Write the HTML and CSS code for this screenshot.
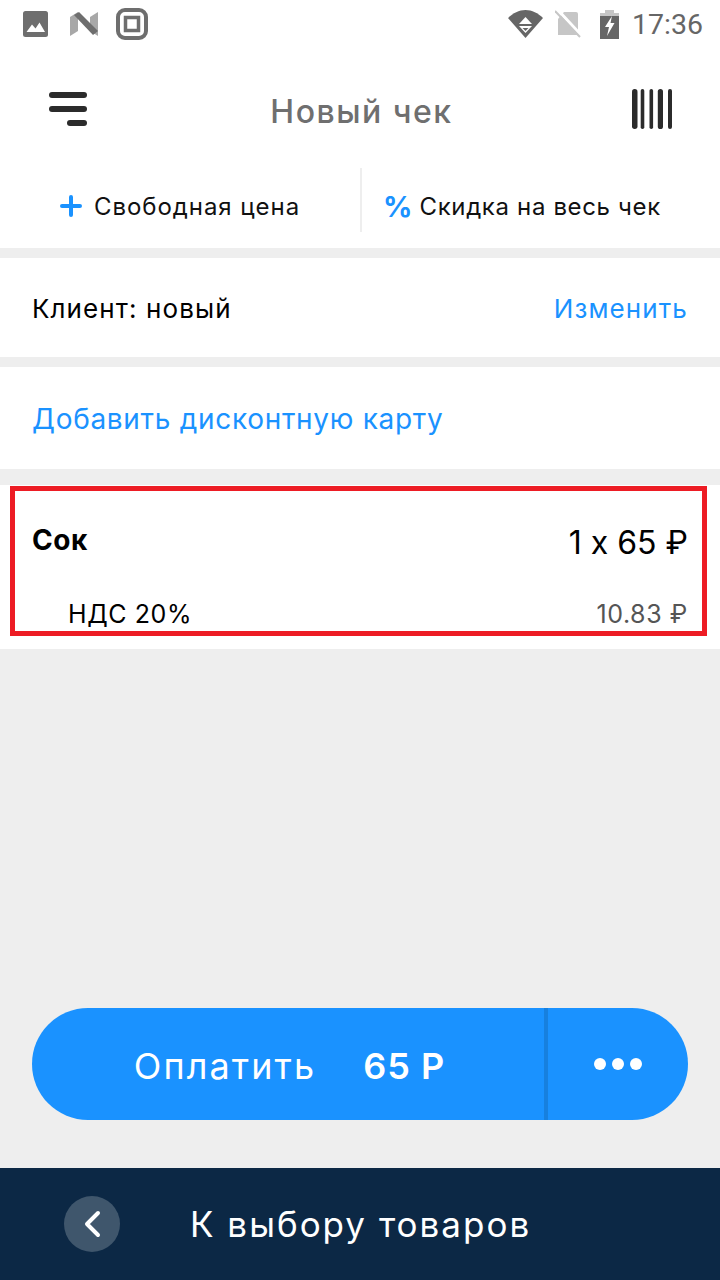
FILE: index.html
```html
<!DOCTYPE html>
<html lang="ru">
<head>
    <meta charset="UTF-8">
    <meta name="viewport" content="width=device-width, initial-scale=1.0">
    <title>Новый чек</title>
    <link rel="stylesheet" href="styles.css">
</head>
<body>
    <div class="screen">
        <!-- Status bar -->
        <div class="status-bar">
            <div class="status-left">
                <svg class="status-image" width="25" height="26" viewBox="0 0 25 26">
                    <rect width="25" height="26" rx="2.5" fill="#6e6e6e"/>
                    <path d="M3.5 21 9 13.5 12.5 17.5 16.5 11.5 22 21Z" fill="#fff"/>
                </svg>
                <svg class="status-n" width="28" height="24" viewBox="0 0 28 24">
                    <path d="M0 5 8 0V19L0 24Z" fill="#a8a8a8"/>
                    <path d="M20 5 28 0V24L20 19Z" fill="#a8a8a8"/>
                    <path d="M4 3 9 0 28 19 23 23Z" fill="#6e6e6e"/>
                </svg>
                <svg class="status-square" width="32" height="32" viewBox="0 0 32 32">
                    <rect x="2" y="2" width="28" height="28" rx="7" fill="none" stroke="#6e6e6e" stroke-width="4"/>
                    <rect x="9.5" y="9.5" width="13" height="13" fill="none" stroke="#6e6e6e" stroke-width="3.5"/>
                </svg>
            </div>
            <div class="status-right">
                <svg class="status-wifi" width="35" height="28" viewBox="0 0 35 28">
                    <path d="M0 8C5 3 11 0 17.5 0S30 3 35 8L17.5 28Z" fill="#666"/>
                    <path d="M17.5 7 24 14H11Z" fill="#fff"/>
                    <path d="M11 16H24L17.5 23Z" fill="#fff"/>
                    <path d="M14.5 18H20.5L17.5 21Z" fill="#666"/>
                </svg>
                <svg class="status-sim" width="26" height="28" viewBox="0 0 26 28">
                    <path d="M3 9 9 2H21Q23 2 23 4V25H3Z" fill="#c6c6c6"/>
                    <path d="M2 -1 26 25" stroke="#fff" stroke-width="3"/>
                    <path d="M0 1 25 27" stroke="#c6c6c6" stroke-width="2"/>
                </svg>
                <svg class="status-battery" width="19" height="29" viewBox="0 0 19 29">
                    <path d="M5 0H14V3H19V29H0V3H5Z" fill="#c6c6c6"/>
                    <path d="M0 6H19V29H0Z" fill="#666"/>
                    <path d="M12 6 5 17H9L7 26 14.5 13H10.5Z" fill="#fff"/>
                </svg>
                <span class="status-time">17:36</span>
            </div>
        </div>

        <!-- Header -->
        <header class="header">
            <svg class="menu-icon" width="38" height="34" viewBox="0 0 38 34">
                <rect y="0" width="38" height="6" rx="3" fill="#2b2b2b"/>
                <rect y="14" width="38" height="6" rx="3" fill="#2b2b2b"/>
                <rect x="18" y="28" width="20" height="6" rx="3" fill="#2b2b2b"/>
            </svg>
            <h1 class="header-title">Новый чек</h1>
            <svg class="barcode-icon" width="40" height="40" viewBox="0 0 40 40">
                <rect x="0" width="5.5" height="40" rx="2.7" fill="#2b2b2b"/>
                <rect x="8.7" width="3.6" height="40" rx="1.8" fill="#2b2b2b"/>
                <rect x="17.5" width="3.6" height="40" rx="1.8" fill="#2b2b2b"/>
                <rect x="25.8" width="5.2" height="40" rx="2.6" fill="#2b2b2b"/>
                <rect x="36" width="4" height="40" rx="2" fill="#2b2b2b"/>
            </svg>
        </header>

        <!-- Actions -->
        <div class="actions">
            <div class="action action-left">
                <svg width="22" height="22" viewBox="0 0 22 22">
                    <path d="M11 2V20M2 11H20" stroke="#1a92ff" stroke-width="4" stroke-linecap="round"/>
                </svg>
                <span>Свободная цена</span>
            </div>
            <div class="action action-right">
                <span class="percent">%</span>
                <span>Скидка на весь чек</span>
            </div>
        </div>

        <div class="row row-client">
            <span>Клиент: новый</span>
            <span class="link">Изменить</span>
        </div>

        <div class="row row-card">
            <span class="link">Добавить дисконтную карту</span>
        </div>

        <!-- Receipt item -->
        <div class="item">
            <div class="item-main">
                <span class="item-name">Сок</span>
                <span class="item-price">1 x 65 ₽</span>
            </div>
            <div class="item-tax">
                <span>НДС 20%</span>
                <span class="item-tax-sum">10.83 ₽</span>
            </div>
            <div class="item-mark"></div>
        </div>

        <div class="spacer"></div>

        <!-- Pay button -->
        <div class="pay">
            <div class="pay-main">
                <span>Оплатить</span>
                <span class="pay-sum">65 Р</span>
            </div>
            <div class="pay-more">
                <i></i><i></i><i></i>
            </div>
        </div>

        <!-- Bottom bar -->
        <footer class="footer">
            <div class="back">
                <svg width="18" height="28" viewBox="0 0 18 28">
                    <path d="M15 3 4 14 15 25" fill="none" stroke="#fff" stroke-width="4" stroke-linecap="round" stroke-linejoin="round"/>
                </svg>
            </div>
            <span class="footer-text">К выбору товаров</span>
        </footer>
    </div>
</body>
</html>
```

FILE: styles.css
```css
* {
    box-sizing: border-box;
}

html, body {
    margin: 0;
    height: 100%;
}

body {
    font-family: 'Inter', 'Noto Sans', sans-serif;
    font-feature-settings: "calt" 0;
    background-color: #eeeeee;
    color: #000;
}

.screen {
    display: flex;
    flex-direction: column;
    width: 720px;
    height: 1280px;
    overflow: hidden;
}

.status-bar {
    display: flex;
    justify-content: space-between;
    align-items: center;
    height: 50px;
    padding: 0 17px 2px 23px;
    background: #fff;
}

.status-left,
.status-right {
    display: flex;
    align-items: center;
}

.status-n {
    margin-left: 22px;
}

.status-square {
    margin-left: 18px;
}

.status-sim {
    margin-left: 12px;
}

.status-battery {
    margin-left: 19px;
}

.status-time {
    margin-left: 13px;
    font-family: 'Roboto', sans-serif;
    font-size: 28.5px;
    color: #666;
}

.header {
    display: flex;
    justify-content: space-between;
    align-items: center;
    height: 118px;
    padding: 0 48px 0 49px;
    background: #fff;
}

.header-title {
    margin: 4px 0 0 4px;
    font-size: 32px;
    font-weight: 500;
    letter-spacing: 1.5px;
    color: #6f6f6f;
}

.actions {
    display: flex;
    height: 80px;
    padding-bottom: 16px;
    background: #fff;
    font-size: 24px;
    letter-spacing: 0.95px;
    color: #111;
}

.action {
    display: flex;
    align-items: center;
    padding-top: 12px;
}

.action-left {
    justify-content: center;
    gap: 12px;
    width: 362px;
    border-right: 2px solid #eeeeee;
}

.action-right {
    flex: 1;
    gap: 7px;
    padding-left: 21px;
    letter-spacing: 0.65px;
}

.percent {
    font-size: 29px;
    font-weight: 700;
    letter-spacing: 0;
    color: #1a92ff;
}

.row {
    display: flex;
    justify-content: space-between;
    align-items: center;
    padding: 0 32px;
    background: #fff;
    font-size: 26px;
    letter-spacing: 1.1px;
}

.row-client {
    height: 99px;
    margin-top: 10px;
    padding-top: 2px;
}

.row-card {
    height: 102px;
    margin-top: 10px;
    padding-top: 2px;
    font-size: 28px;
    letter-spacing: 0.7px;
}

.link {
    color: #1a92ff;
}

.item {
    position: relative;
    height: 164px;
    margin-top: 16px;
    padding: 0 32px;
    background: #fff;
}

.item-main {
    display: flex;
    justify-content: space-between;
    align-items: center;
    height: 110px;
}

.item-name {
    font-size: 28px;
    font-weight: 700;
    letter-spacing: 0.6px;
}

.item-price {
    padding-top: 4px;
    font-size: 32px;
}

.item-tax {
    display: flex;
    justify-content: space-between;
    align-items: center;
    padding: 4px 0 0 36px;
    font-size: 25px;
    letter-spacing: 0.6px;
}

.item-tax-sum {
    color: #555;
}

/* red annotation frame on top of the row */
.item-mark {
    position: absolute;
    top: 1px;
    left: 10px;
    width: 697px;
    height: 150px;
    border: 5px solid #ed1c24;
}

.spacer {
    flex: 1;
}

.pay {
    display: flex;
    height: 112px;
    margin: 0 32px 48px;
    border-radius: 56px;
    background: #1a92ff;
    color: #fff;
}

.pay-main {
    display: flex;
    justify-content: center;
    align-items: center;
    gap: 47px;
    width: 516px;
    padding: 4px 0 0 3px;
    font-size: 36px;
    letter-spacing: 2.1px;
    border-right: 4px solid #1780de;
}

.pay-sum {
    font-weight: 600;
    letter-spacing: 1px;
}

.pay-more {
    display: flex;
    flex: 1;
    justify-content: center;
    align-items: center;
    gap: 6px;
}

.pay-more i {
    display: block;
    width: 12px;
    height: 12px;
    border-radius: 50%;
    background: #fff;
}

.footer {
    display: flex;
    align-items: center;
    gap: 70px;
    height: 112px;
    padding-left: 64px;
    background: #0c2845;
    color: #fff;
    font-size: 35px;
    letter-spacing: 2px;
}

.back {
    display: flex;
    justify-content: center;
    align-items: center;
    width: 56px;
    height: 56px;
    border-radius: 50%;
    background: #3f566c;
}
```
